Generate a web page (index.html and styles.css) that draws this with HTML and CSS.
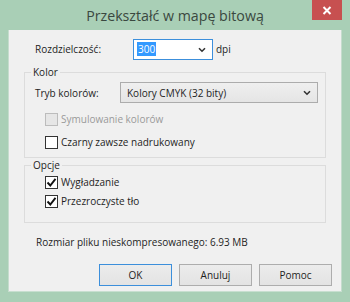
FILE: index.html
```html
<!DOCTYPE html>
<html lang="pl">
<head>
<meta charset="utf-8">
<link rel="stylesheet" href="styles.css">
</head>
<body>
<div class="window">
  <div class="titlebar">
    <span class="title">Przekształć w mapę bitową</span>
    <div class="close"><svg width="10" height="9" viewBox="0 0 10 9"><path d="M1.5 1 L8.5 8 M8.5 1 L1.5 8" stroke="#fff" stroke-width="2"/></svg></div>
  </div>
  <div class="client">
    <div class="row res">
      <span class="lbl res-lbl">Rozdzielczość:</span>
      <div class="combo edit"><span class="sel">300</span><svg class="chev" width="8" height="6" viewBox="0 0 8 6"><path d="M1 1.2 L4 4.2 L7 1.2" fill="none" stroke="#333" stroke-width="1.6"/></svg></div>
      <span class="lbl">dpi</span>
    </div>
    <fieldset class="group kolor">
      <legend>Kolor</legend>
      <div class="row mode">
        <span class="lbl mode-lbl">Tryb kolorów:</span>
        <div class="combo ro"><span>Kolory CMYK (32 bity)</span><svg class="chev" width="8" height="6" viewBox="0 0 8 6"><path d="M1 1.2 L4 4.2 L7 1.2" fill="none" stroke="#333" stroke-width="1.6"/></svg></div>
      </div>
      <div class="check disabled"><span class="box"></span><span>Symulowanie kolorów</span></div>
      <div class="check"><span class="box"></span><span>Czarny zawsze nadrukowany</span></div>
    </fieldset>
    <fieldset class="group opcje">
      <legend>Opcje</legend>
      <div class="check"><span class="box"><svg width="11" height="11" viewBox="0 0 11 11"><path d="M1.5 5.5 L4.3 8.5 L9.5 1.8" fill="none" stroke="#111" stroke-width="1.9"/></svg></span><span>Wygładzanie</span></div>
      <div class="check"><span class="box"><svg width="11" height="11" viewBox="0 0 11 11"><path d="M1.5 5.5 L4.3 8.5 L9.5 1.8" fill="none" stroke="#111" stroke-width="1.9"/></svg></span><span>Przezroczyste tło</span></div>
    </fieldset>
    <div class="size">Rozmiar pliku nieskompresowanego: 6.93 MB</div>
    <div class="buttons">
      <button class="btn default">OK</button>
      <button class="btn">Anuluj</button>
      <button class="btn">Pomoc</button>
    </div>
  </div>
</div>
</body>
</html>
```
FILE: styles.css
```css
* { box-sizing: border-box; }
html, body { margin: 0; padding: 0; }
body { width: 350px; height: 302px; overflow: hidden; font-family: "Open Sans", "Noto Sans", sans-serif; font-size: 10px; color: #1e1e1e; }
.window { width: 350px; height: 302px; background: #a9cfb6; display: flex; flex-direction: column; position: relative; }
.titlebar { height: 30px; display: flex; align-items: center; justify-content: center; }
.title { font-size: 14.2px; color: #3a4840; }
.close { position: absolute; top: 0; right: 8px; width: 30px; height: 20px; background: #c75050; display: flex; align-items: center; justify-content: center; }
.client { margin: 0 8px 0 8px; height: 262px; background: #f0f0f0; border: 1px solid #c5dccd; border-top: none; border-bottom-color: #c8dfd0; position: relative; display: flex; flex-direction: column; }
.row { display: flex; align-items: center; }
.res { padding: 8px 0 0 26px; height: 30px; }
.res-lbl { width: 98px; }
.combo { height: 21px; display: flex; align-items: center; position: relative; }
.combo.edit { width: 80px; background: #fff; border: 1px solid #3c8fdb; padding-left: 3px; margin-right: 3px; }
.sel { background: #3399ff; color: #fff; padding: 0 1px; line-height: 14px; }
.chev { position: absolute; right: 6px; top: 7px; }
.combo.ro { width: 198px; background: linear-gradient(#efefef, #e5e5e5); border: 1px solid #acacac; padding-left: 6px; }
.group { margin: 6px 0 0 15px; width: 302px; border: 1px solid #dcdcdc; padding: 0; min-width: 0; }
.group legend { padding: 0 2px; margin-left: 6px; line-height: 12px; }
.kolor { height: 92px; margin-top: 6px; }
.mode { padding: 4px 0 0 10px; }
.mode-lbl { width: 85px; }
.check { display: flex; align-items: center; margin-left: 20px; height: 14px; }
.kolor .check { margin-top: 9px; }
.opcje { height: 64px; margin-top: 1px; }
.opcje .check { margin-top: 5px; }
.opcje .check:first-of-type { margin-top: 4px; }
.box { width: 13px; height: 13px; border: 1px solid #333; background: #fff; margin-right: 3px; display: flex; align-items: center; justify-content: center; }
.disabled { color: #9a9a9a; }
.disabled .box { border-color: #bcbcbc; background: #e6e6e6; }
.size { margin: 12px 0 0 27px; }
.buttons { display: flex; gap: 7px; margin: 15px 0 0 90px; }
.btn { width: 73px; height: 22px; font: inherit; background: linear-gradient(#ececec, #e3e3e3); border: 1px solid #adadad; color: #1e1e1e; padding: 0; }
.btn.default { border-color: #3c8fdb; }
```
